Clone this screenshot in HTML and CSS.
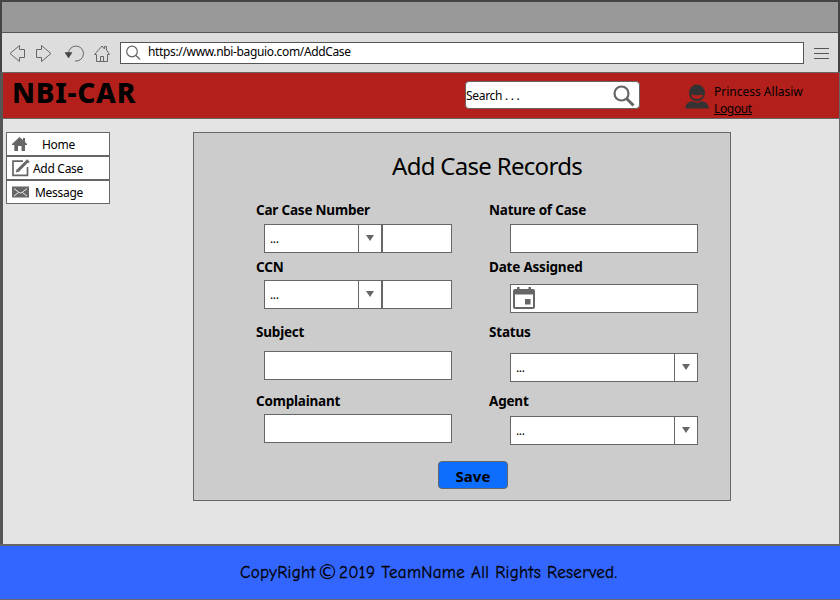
FILE: index.html
```html
<!DOCTYPE html>
<html lang="en">
<head>
<meta charset="utf-8">
<title>NBI-CAR</title>
<link rel="stylesheet" href="styles.css">
</head>
<body>
<div class="window">
  <div class="titlebar"></div>
  <div class="toolbar">
    <svg class="nav-icons" width="110" height="24" viewBox="0 0 110 24" fill="none" stroke="#666">
      <path d="M2 12.500 L11.500 4.500 V8.500 H16.500 V16.500 H11.500 V20.500 Z"/>
      <path d="M43 12.500 L33.500 4.500 V8.500 H28.500 V16.500 H33.500 V20.500 Z"/>
      <path d="M60.500 12.500 A7.500 7.500 0 1 1 67 20"/>
      <path d="M57 11.500 H64 L60.500 17 Z" fill="#444" stroke="#444" stroke-width=".5"/>
      <path d="M86.500 13.500 L94 5 L96.500 8 V5.500 H98.500 V9 L101.500 13.500 H99.500 V20.500 H88.500 V13.500 Z M92.500 20.500 V15.500 H95.500 V20.500"/>
    </svg>
    <div class="address">
      <svg width="16" height="16" viewBox="0 0 16 16" fill="none" stroke="#666"><circle cx="6" cy="6.500" r="5.300" stroke-width="1.200"/><path d="M10 10.500 L14 14.500" stroke-width="1.500"/></svg>
      <span class="url">https://www.nbi-baguio.com/AddCase</span>
    </div>
    <div class="menu"><i></i><i></i><i></i></div>
  </div>
  <header class="header">
    <div class="brand">NBI-CAR</div>
    <div class="search">
      <span>Search . . .</span>
      <svg width="22" height="22" viewBox="0 0 22 22" fill="none" stroke="#666"><circle cx="8.500" cy="8.500" r="7" stroke-width="2.200"/><path d="M13.500 13.500 L20.500 20.500" stroke-width="3"/></svg>
    </div>
    <div class="user">
      <svg width="24" height="25" viewBox="0 0 24 25"><path d="M0 24.500 C1 19.500 4 17.500 7.500 17.300 Q12 20 16.500 17.300 C20 17.500 23 19.500 24 24.500 Z" fill="#333"/><ellipse cx="12" cy="9" rx="8" ry="8.500" fill="#333"/><path d="M6 10.500 Q12 12 18 10.500 Q17 15 12 15 Q7 15 6 10.500 Z" fill="#b3201c"/></svg>
      <div class="user-text"><span class="name">Princess Allasiw</span><a class="logout">Logout</a></div>
    </div>
  </header>
  <main class="main">
    <nav class="side">
      <a class="home"><svg width="16" height="14" viewBox="0 0 16 14" fill="#666"><path d="M7.500 0 L11 3 V1 H13 V5 L15 7 V8 H13 V14 H9.500 V9 H6 V14 H2.300 V8 H0 V7 Z"/></svg><span>Home</span></a>
      <a class="add"><svg width="18" height="18" viewBox="0 0 18 18" fill="none" stroke="#666"><path d="M11 2.200 H1 V16.300 H15.500 V8" stroke-width="1.700"/><path d="M6 11.500 L15 2.500" stroke-width="3"/><path d="M14.500 1 L17 3.500" stroke-width="2"/><path d="M4.500 10 L4 13.500 L7.500 12.500 Z" fill="#666" stroke="none"/></svg><span>Add Case</span></a>
      <a class="message"><svg width="17" height="12" viewBox="0 0 17 12"><rect y=".5" width="17" height="11" fill="#666"/><path d="M2 2.500 L7 6.500 Q8.500 7.500 10 6.500 L15 2.500 M2 10 L6.500 6.500 M15 10 L10.500 6.500" fill="none" stroke="#eee"/></svg><span>Message</span></a>
    </nav>
    <form class="panel">
      <h1>Add Case Records</h1>
      <div class="fields">
        <div class="col left">
          <div class="field r1"><label>Car Case Number</label><div class="box pair"><span class="value">...</span><b class="arrow"></b><span class="extra"></span></div></div>
          <div class="field r2"><label>CCN</label><div class="box pair"><span class="value">...</span><b class="arrow"></b><span class="extra"></span></div></div>
          <div class="field r3"><label>Subject</label><div class="box"></div></div>
          <div class="field r4"><label>Complainant</label><div class="box"></div></div>
        </div>
        <div class="col right">
          <div class="field r1"><label>Nature of Case</label><div class="box"></div></div>
          <div class="field r2"><label>Date Assigned</label><div class="box date"><svg width="22" height="22" viewBox="0 0 22 22"><path fill="#666" fill-rule="evenodd" d="M2 2 H4 V0 H6.500 V2 H15.500 V0 H18 V2 H20 Q22 2 22 4 V20 Q22 22 20 22 H2 Q0 22 0 20 V4 Q0 2 2 2 Z M2 7.500 V20 H20 V7.500 Z M12 12 H17.500 V17.500 H12 Z"/></svg></div></div>
          <div class="field r3"><label>Status</label><div class="box select"><span class="value">...</span><b class="arrow"></b></div></div>
          <div class="field r4"><label>Agent</label><div class="box select"><span class="value">...</span><b class="arrow"></b></div></div>
        </div>
      </div>
      <button class="save" type="button">Save</button>
    </form>
  </main>
  <footer class="footer"><span class="copy">CopyRight</span><span class="mark">©</span><span class="rights">2019 TeamName All Rights Reserved.</span></footer>
</div>
</body>
</html>
```

FILE: styles.css
```css
* { box-sizing: border-box; }
body { margin: 0; font: 12px/16px "Segoe UI", "Noto Sans", sans-serif; color: #000; }
svg { display: block; flex: none; }
.window { width: 840px; height: 600px; background: #e4e4e4; display: flex; flex-direction: column; overflow: hidden; }
.titlebar { height: 33px; background: #999; border: 2px solid #444; border-bottom: 1px solid #555; flex: none; }
.toolbar { height: 39px; background: #ddd; border: solid #444; border-width: 0 2px; display: flex; align-items: center; flex: none; padding: 1px 0 0 6px; }
.nav-icons { margin-right: 2px; }
.address { width: 684px; height: 22px; border: 1px solid #555; background: #fff; display: flex; align-items: center; padding-left: 5px; }
.url { margin: 0 0 2px 6px; white-space: nowrap; letter-spacing: -.35px; }
.menu { width: 15px; margin-left: 10px; display: flex; flex-direction: column; gap: 4px; }
.menu i { height: 1px; background: #555; }
.header { height: 47px; background: #b3201c; border: 1px solid #666; border-left: 3px solid #555; display: flex; flex: none; padding-left: 9px; }
.brand { width: 453px; font-size: 28px; line-height: 39px; font-weight: 800; letter-spacing: .75px; }
.search { width: 175px; height: 28px; margin-top: 8px; background: #fff; border: 1px solid #666; border-radius: 4px; display: flex; justify-content: space-between; align-items: center; padding: 0 4px 0 0; }
.search svg { margin-top: 1px; }
.search span { padding-top: 2px; letter-spacing: -.3px; }
.user { display: flex; margin: 11px 0 0 45px; gap: 5px; }
.user-text { display: flex; flex-direction: column; align-items: flex-start; line-height: 17px; margin-top: -1px; white-space: nowrap; }
.logout { text-decoration: underline; letter-spacing: -.35px; }
.main { height: 425px; border-left: 3px solid #555; border-right: 1px solid #666; display: flex; align-items: flex-start; padding: 13px 0 0 3px; flex: none; }
.side { width: 104px; border: 1px solid #666; background: #fff; }
.side a { height: 24px; display: flex; align-items: center; padding-left: 5px; }
.side a + a { border-top: 2px solid #666; }
.side .home { height: 22px; }
.side span { padding-top: 2px; letter-spacing: -.3px; }
.home span { margin-left: 14px; }
.add span { margin-left: 3px; }
.message span { margin-left: 6px; }
.panel { width: 538px; height: 369px; margin-left: 83px; border: 1px solid #666; background: #ccc; display: flex; flex-direction: column; }
h1 { margin: 16px 0 0 198px; font-size: 24px; line-height: 34px; font-weight: 400; white-space: nowrap; letter-spacing: -.7px; }
.fields { display: flex; margin: 17px 0 0 62px; height: 261px; }
.col { width: 233px; }
label { display: block; height: 20px; font-size: 13.5px; line-height: 20px; font-weight: 700; white-space: nowrap; letter-spacing: -.2px; }
.r1 { height: 57px; }
.r2 { height: 65px; }
.r3 { height: 69px; }
.box { width: 188px; height: 29px; border: 1px solid #666; background: #fff; display: flex; margin: 4px 0 0 8px; }
.right .box { margin-left: 21px; }
.left .r2 .box, .left .r4 .box { margin-top: 3px; }
.left .r3 .box { margin-top: 9px; }
.right .r2 .box { margin-top: 7px; }
.right .r3 .box { margin-top: 11px; }
.right .r4 .box { margin-top: 5px; }
.value { flex: 1; padding: 6px 0 0 5px; letter-spacing: -.4px; }
.arrow { width: 23px; border-left: 1px solid #666; }
.arrow::before { content: ""; display: block; width: 0; margin: 10px 0 0 7px; border: 4px solid transparent; border-top: 6px solid #666; border-bottom: 0; }
.extra { width: 70px; border-left: 2px solid #666; }
.date { padding: 2px; }
.save { width: 70px; height: 28px; margin: 0 0 0 244px; border: 1px solid #666; border-radius: 4px; background: #0d6efd; color: #000; font: 700 15px/24px "Segoe UI", "Noto Sans", sans-serif; padding: 1px 0 0; }
.footer { height: 56px; border-top: 2px solid #666; border-bottom: 1px solid #666; background: #36f; font: 17px/22px "Comic Sans MS", "Comic Neue", cursive, sans-serif; display: flex; padding: 16px 0 0 240px; white-space: nowrap; -webkit-text-stroke: .3px #000; letter-spacing: .3px; }
.copy { width: 77px; }
.mark { width: 22px; font: 21px/21px "DejaVu Sans", sans-serif; -webkit-text-stroke: 0; }
```
